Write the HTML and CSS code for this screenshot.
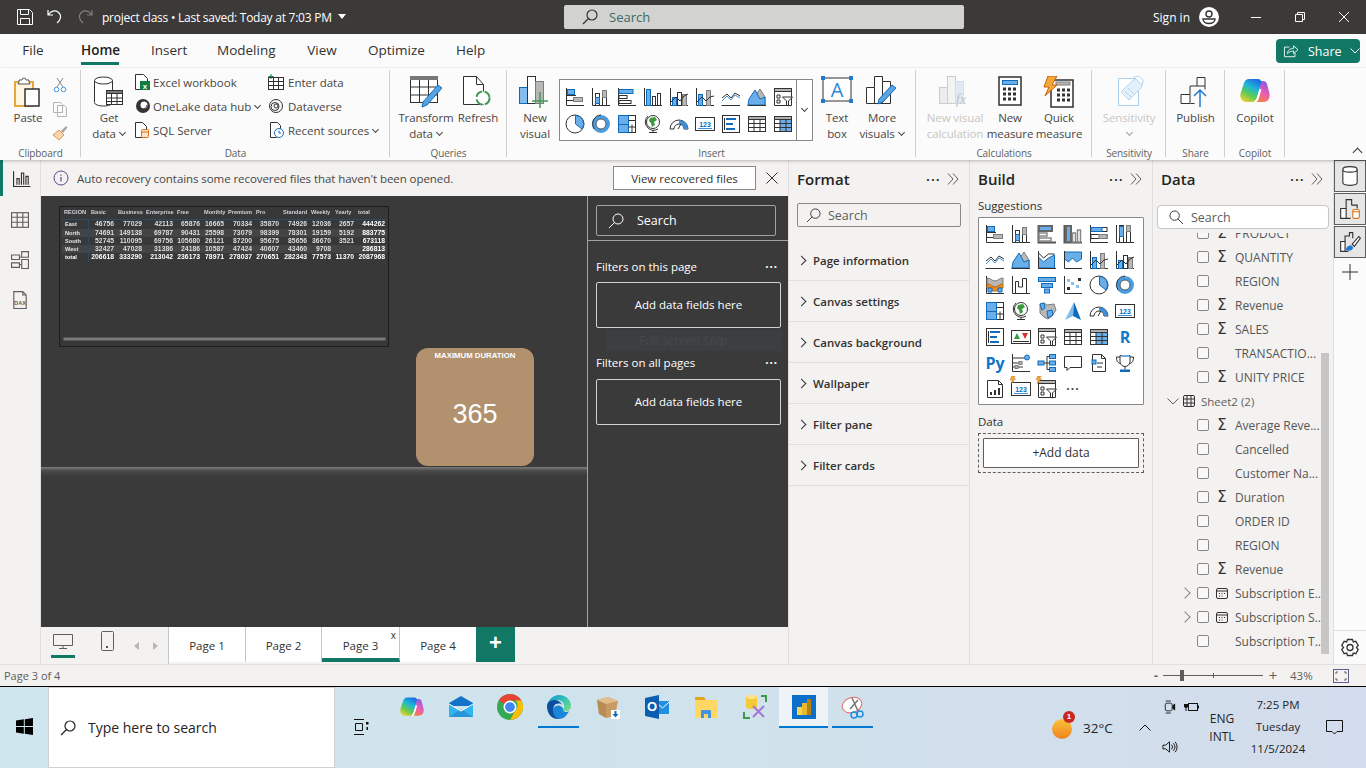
FILE: index.html
```html
<!DOCTYPE html>
<html lang="en">
<head>
<meta charset="utf-8">
<title>project class - Power BI Desktop</title>
<link rel="stylesheet" href="styles.css">
</head>
<body>
<svg class="defs" aria-hidden="true">
<defs>
<linearGradient id="cpL" x1="0.7" y1="0" x2="0.2" y2="1"><stop offset="0" stop-color="#1c6fe0"/><stop offset=".35" stop-color="#1fb8d8"/><stop offset=".65" stop-color="#5ecb52"/><stop offset="1" stop-color="#f6d02f"/></linearGradient>
<linearGradient id="cpR" x1="0.7" y1="0" x2="0.3" y2="1"><stop offset="0" stop-color="#8a5be8"/><stop offset=".5" stop-color="#e85cb4"/><stop offset="1" stop-color="#f8833c"/></linearGradient>
<linearGradient id="edge1" x1="0" y1="0" x2="1" y2="1"><stop offset="0" stop-color="#0f8fd8"/><stop offset=".55" stop-color="#36c9b0"/><stop offset="1" stop-color="#7fe07a"/></linearGradient>
<linearGradient id="weather" x1="0" y1="0" x2="0" y2="1"><stop offset="0" stop-color="#f9c23c"/><stop offset="1" stop-color="#f0821e"/></linearGradient>

<symbol id="hs" viewBox="0 0 20 20"><path class="k" d="M1.5 1v17.500H19"/><path class="k" d="M2 8.500h9M2 13.500h15"/><rect class="b" x="2.500" y="2.500" width="7" height="5"/><rect class="g" x="8.500" y="10.500" width="9" height="4"/></symbol>
<symbol id="cs" viewBox="0 0 20 20"><path class="k" d="M1.500 1v17.500H19"/><rect class="kf" x="4.500" y="6.500" width="4" height="12"/><rect class="b" x="4.500" y="10.500" width="4" height="6"/><rect class="kf" x="11.500" y="3.500" width="4" height="15"/><rect class="g" x="11.500" y="3.500" width="4" height="7"/></symbol>
<symbol id="hc" viewBox="0 0 20 20"><path class="k" d="M1.500 1v17.500H19"/><rect class="b" x="2" y="2.500" width="14" height="4"/><rect class="kf" x="2" y="8.500" width="8" height="3"/><rect class="kf" x="2" y="13.500" width="12" height="3"/></symbol>
<symbol id="cc" viewBox="0 0 20 20"><path class="k" d="M1.500 1v17.500H19"/><rect class="b" x="3.500" y="2.500" width="4" height="16"/><rect class="kf" x="9.500" y="9.500" width="3" height="9"/><rect class="kf" x="14.500" y="6.500" width="3" height="12"/></symbol>
<symbol id="hcg" viewBox="0 0 20 20"><path class="g2" d="M1.500 1v17.500H19"/><rect class="gb" x="2" y="2" width="13" height="5"/><rect class="gk" x="2" y="9" width="8" height="3"/><rect class="gk" x="2" y="14" width="12" height="3"/></symbol>
<symbol id="ccg" viewBox="0 0 20 20"><path class="g2" d="M1.500 1v17.500H19"/><rect class="gb" x="3" y="2" width="5" height="16"/><rect class="gk" x="9.500" y="9" width="3" height="9"/><rect class="gk" x="14.500" y="6" width="3" height="12"/></symbol>
<symbol id="h100" viewBox="0 0 20 20"><path class="k" d="M1.500 1v17.500H19"/><rect class="kf" x="2" y="3.500" width="16" height="4"/><rect class="b" x="2" y="3.500" width="11" height="4"/><rect class="kf" x="2" y="10.500" width="16" height="4"/><rect class="g" x="10" y="10.500" width="8" height="4"/></symbol>
<symbol id="c100" viewBox="0 0 20 20"><path class="k" d="M1.500 1v17.500H19"/><rect class="kf" x="4.500" y="1.500" width="4" height="17"/><rect class="b" x="4.500" y="2.500" width="4" height="10"/><rect class="kf" x="11.500" y="1.500" width="4" height="17"/><rect class="g" x="11.500" y="1.500" width="4" height="6"/></symbol>
<symbol id="ln" viewBox="0 0 20 20"><path class="k" d="M.5 18.500H19"/><path class="k" d="M1 11l5-4 4 4 4-5 5 3"/><path class="bl" d="M1 14l5-5 4 4 4-5 5 3"/></symbol>
<symbol id="ar" viewBox="0 0 20 20"><path class="g" d="M8 9l5-7 5 8v8H8z"/><path class="b" d="M1 18l1-6 6-9 5 9 5-2v8z"/><path class="k" d="M.5 18.500H19"/></symbol>
<symbol id="sa" viewBox="0 0 20 20"><path class="b" d="M1.500 7l5 5 5-4 6-3v13h-16z"/><path class="k" d="M1.500 1v17.500H19M1.500 3l5 5 5-4 6 0"/></symbol>
<symbol id="rib" viewBox="0 0 20 20"><path class="b" d="M1.500 2h17v7l-5 3-4-4-4 4-4-3z"/><path class="k" d="M1.500 1v17.500H19"/></symbol>
<symbol id="cb1" viewBox="0 0 20 20"><path class="k" d="M1.500 1v17.500H19"/><rect class="b" x="3.500" y="7.500" width="4" height="11"/><rect class="g" x="11.500" y="3.500" width="4" height="15"/><path class="k" d="M2 15l5-5 4 4 4-4 4-1"/></symbol>
<symbol id="cb2" viewBox="0 0 20 20"><path class="k" d="M1.500 1v17.500H19"/><rect class="b" x="3.500" y="10.500" width="4" height="8"/><rect class="kf" x="8.500" y="5.500" width="4" height="13"/><rect class="g" x="13.500" y="7.500" width="4" height="11"/><path class="k" d="M2 15l5-5 4 4 4-5 4-2"/></symbol>
<symbol id="rbn" viewBox="0 0 20 20"><path class="k" d="M1.500 1v17.500H19"/><path class="g" d="M2 3c4 0 5 3 8 3s4-3 8-3v6c-4 0-5 3-8 3s-4-3-8-3z"/><path fill="#f08b1c" stroke="#c66a0c" d="M2 9c4 0 5 3 8 3s4-3 8-3v4h-4l-2 3h-4l-2-3H2z"/><path class="b" d="M3 13h4v4H3zM13 13h4v4h-4z"/></symbol>
<symbol id="wf" viewBox="0 0 20 20"><path class="k" d="M1.500 1v17.500H19M4.500 18V6.500h3V12h4V3.500h4V18"/></symbol>
<symbol id="fn" viewBox="0 0 20 20"><rect class="b" x="1.500" y="2.500" width="17" height="4"/><rect class="b" x="4.500" y="8.500" width="11" height="4"/><rect class="b" x="7.500" y="14" width="5" height="4"/></symbol>
<symbol id="sc" viewBox="0 0 20 20"><path class="k" d="M1.500 1v17.500H19"/><rect x="4" y="12" width="3" height="3" fill="#333"/><rect x="8" y="7" width="3" height="3" fill="#8bc0ea"/><rect x="13" y="10" width="3" height="3" fill="#8bc0ea"/><rect x="15" y="3" width="3" height="3" fill="#333"/><rect x="4" y="4" width="3" height="3" fill="#8bc0ea"/></symbol>
<symbol id="pie" viewBox="0 0 20 20"><circle class="kf" cx="10" cy="10" r="9"/><path class="b" d="M10.500 1.500a8.500 8.500 0 0 1 6.500 13.500l-6.500-5z"/></symbol>
<symbol id="don" viewBox="0 0 20 20"><circle cx="10" cy="10" r="7" fill="none" stroke="#4a9be0" stroke-width="4"/><circle cx="10" cy="10" r="5" fill="#fff" stroke="#555"/><path class="k" d="M10 1a9 9 0 0 0-7 14"/></symbol>
<symbol id="tm" viewBox="0 0 20 20"><rect class="kf" x="1.500" y="1.500" width="17" height="17"/><rect class="b" x="1.500" y="1.500" width="10" height="9"/><rect class="b" x="1.500" y="10.500" width="10" height="8"/><path class="k" d="M11.500 6.500h7M15 10.500v8M11.500 13h7"/></symbol>
<symbol id="glb" viewBox="0 0 20 20"><circle class="kf" cx="10" cy="8" r="6.500"/><path fill="#3a9a3e" d="M7 4l5-1 2 3-3 2 1 3-3 2-1-4-2-2z"/><path class="k" d="M5 2a8 8 0 0 0 0 12 8 8 0 0 0 10 1M10 16v2.500M6 18.500h8"/></symbol>
<symbol id="fm" viewBox="0 0 20 20"><path class="g" d="M3 3l4-1 3 2 7-1 2 6-4 6-4 3-4-2-4-4z"/><path class="b" d="M3 3l4-1 1 5-3 2zM10 10l5-1 1 5-5 3z"/></symbol>
<symbol id="arw" viewBox="0 0 20 20"><path fill="#7fbdea" d="M11 1L2 19l8-4z"/><path fill="#0f6cbd" d="M11 1l7 18-8-4z"/></symbol>
<symbol id="gau" viewBox="0 0 20 20"><path class="k" d="M1 15a9 9 0 0 1 18 0h-4a5 5 0 0 0-10 0z"/><path fill="#3b8edb" d="M10 6a9 9 0 0 1 9 9h-4a5 5 0 0 0-5-5z"/><path class="k" d="M9 15l3-5"/></symbol>
<symbol id="crd" viewBox="0 0 20 20"><rect class="kf" x=".5" y="3.500" width="19" height="13"/><text class="t123" x="10" y="12.500" text-anchor="middle">123</text><path class="bl" d="M3 14.500h14"/></symbol>
<symbol id="mrc" viewBox="0 0 20 20"><rect class="kf" x="1.500" y="1.500" width="17" height="17"/><path class="bl2" d="M5 5h10M5 10h7M5 15h9"/><path class="k" d="M3.500 4v12"/></symbol>
<symbol id="kpi" viewBox="0 0 20 20"><rect class="kf" x=".5" y="3.500" width="19" height="13"/><path fill="#3a9a3e" d="M6 6l3 6H3z"/><path fill="#d13438" d="M11 6h6l-3 6z"/><path class="k" d="M2 14.500h16"/></symbol>
<symbol id="slc" viewBox="0 0 20 20"><path class="kf" d="M1.500 1.500h17v17h-17z"/><path d="M1.500 1.500h17v3h-17z" fill="#b5b5b5" stroke="#333"/><path class="k" d="M4 8h3v3H4zM4 13h3v3H4z"/><path class="kf" d="M9.500 10h10l-4 4v5l-2-1v-4z"/></symbol>
<symbol id="tbl" viewBox="0 0 20 20"><rect class="kf" x="1.500" y="2.500" width="17" height="15"/><path d="M1.500 2.500h17v3h-17z" fill="#b0b0b0" stroke="#333"/><path class="k" d="M1.500 9.500h17M1.500 13.500h17M7 5v12M13 5v12"/></symbol>
<symbol id="mtx" viewBox="0 0 20 20"><rect class="kf" x="1.500" y="2.500" width="17" height="15"/><rect x="7" y="6" width="11" height="11" fill="#69aee8"/><path d="M1.500 2.500h17v3h-17z" fill="#b0b0b0" stroke="#333"/><path class="k" d="M1.500 9.500h17M1.500 13.500h17M7 5v12M13 5v12"/></symbol>
<symbol id="rr" viewBox="0 0 20 20"><text class="tr" x="10" y="16" text-anchor="middle">R</text></symbol>
<symbol id="py" viewBox="0 0 20 20"><text class="tpy" x="10" y="16" text-anchor="middle">Py</text></symbol>
<symbol id="ki" viewBox="0 0 20 20"><path class="k" d="M1.500 1v17.500H19M2 5h12M2 10h6M2 14h10"/><circle class="b" cx="16" cy="4.500" r="2.500"/><rect class="g" x="8" y="8.500" width="3" height="3"/><rect class="g" x="4" y="12.500" width="3" height="3"/></symbol>
<symbol id="dt" viewBox="0 0 20 20"><rect class="b" x="1" y="8" width="6" height="4"/><rect class="b" x="12.500" y="1.500" width="6" height="4"/><rect class="b" x="12.500" y="8" width="6" height="4"/><rect class="b" x="12.500" y="14.500" width="6" height="4"/><path class="k" d="M7 10h5.500M10 3.500h2.500M10 16.500h2.500M10 3.500v13"/></symbol>
<symbol id="qa" viewBox="0 0 20 20"><path class="kf" d="M1.500 3.500h17v11H7l-3 3v-3H1.500z"/></symbol>
<symbol id="nar" viewBox="0 0 20 20"><path class="kf" d="M3.500 1.500h9l4 4v13h-13z"/><path class="k" d="M12.500 1.500v4h4M8 10h6M8 14h5"/><rect class="b" x="3" y="7" width="4" height="4"/></symbol>
<symbol id="goal" viewBox="0 0 20 20"><path class="k" d="M5 2.500h10v6a5 5 0 0 1-10 0zM5 4H1.500c0 4 1 6 4 6.500M15 4h3.500c0 4-1 6-4 6.500M10 13.500v3"/><rect fill="#0f6cbd" x="5" y="16.500" width="10" height="2.500"/><rect fill="#69aee8" x="6" y="2" width="8" height="2"/></symbol>
<symbol id="pag" viewBox="0 0 20 20"><path class="kf" d="M2.500 1.500h11l4 4v13h-15z"/><path class="k" d="M13.500 1.500v4h4"/><path stroke="#333" stroke-width="2" d="M6 16v-3M10 16v-5M14 16V9"/></symbol>
<symbol id="bolt" viewBox="0 0 20 20"><path fill="#f2a83b" stroke="#c8600c" stroke-width=".8" d="M5 0h6L8 5h4l-8 9 2-7H2z"/></symbol>

<symbol id="paste" viewBox="0 0 32 32"><path fill="#fff6df" stroke="#e9a640" stroke-width="2" d="M3 6h18v24H3z"/><path fill="#fff" stroke="#555" d="M7 6V4h3a2 2 0 0 1 4 0h3v2l1 2H6z"/><rect fill="#fff" stroke="#333" stroke-width="1.500" x="13" y="13" width="14" height="17"/></symbol>
<symbol id="getd" viewBox="0 0 32 32"><path class="kf" d="M1.500 4.500v22c0 2 4 3.500 9 3.500s9-1.500 9-3.500v-22"/><ellipse class="kf" cx="10.500" cy="4.500" rx="9" ry="3.500"/><rect class="kf" x="13.500" y="14.500" width="16" height="14"/><path d="M13.500 14.500h16v3h-16z" fill="#777" stroke="#333"/><path class="k" d="M13.500 22h16M13.500 25.500h16M18.500 17v11M24 17v11"/></symbol>
<symbol id="trf" viewBox="0 0 32 32"><rect class="kf" x=".5" y=".5" width="27" height="26"/><rect fill="#777" x="0" y="0" width="28" height="4"/><path class="k" d="M.5 11h27M.5 19h27M9.500 4v23M18.500 4v23"/><path fill="#5aa5e0" stroke="#0f6cbd" d="M28 9l4 3-15 17-5 2 1-5z"/></symbol>
<symbol id="rfr" viewBox="0 0 32 32"><path class="kf" d="M1.500 .5h13l7 8v20h-20z"/><path class="k" d="M14.500 .5v8h7"/><circle cx="21" cy="22" r="6.500" fill="#fff" stroke="#3f9a5a" stroke-width="2" stroke-dasharray="8 2.500"/></symbol>
<symbol id="nv" viewBox="0 0 32 32"><rect class="b2" x=".5" y="11.500" width="8" height="16"/><rect class="kf" x="8.500" y=".5" width="8" height="27"/><rect class="g" x="16.500" y="5.500" width="8" height="22"/><path fill="none" stroke="#3f9a5a" stroke-width="1.500" d="M21 16v16M13 25h16"/></symbol>
<symbol id="tb" viewBox="0 0 32 32"><rect class="kf" x="2" y="2" width="28" height="23"/><path fill="#1f7ad0" d="M0 0h4v4H0zM28 0h4v4h-4zM0 23h4v4H0zM28 23h4v4h-4z"/><text class="ta" x="16" y="21" text-anchor="middle">A</text></symbol>
<symbol id="mv" viewBox="0 0 32 32"><path class="kf" d="M.5 27.500v-16h8v-11h8v5h8v22z"/><path class="k" d="M8.500 11.500v16M16.500 5.500v22"/><path fill="#5aa5e0" stroke="#0f6cbd" d="M26 9l4 3-13 14-5 2 1-5z"/></symbol>
<symbol id="nvc" viewBox="0 0 32 32"><rect fill="#ededed" stroke="#ccc" x=".5" y="11.500" width="8" height="16"/><rect fill="#f3f3f3" stroke="#ccc" x="8.500" y=".5" width="8" height="27"/><rect fill="#dfeaf5" stroke="#ddd" x="16.500" y="5.500" width="8" height="22"/><text class="tfx" x="22" y="28" text-anchor="middle">fx</text></symbol>
<symbol id="calc" viewBox="0 0 32 32"><rect class="kf2" x="5" y="1" width="22" height="28"/><rect class="b" x="8.500" y="4.500" width="15" height="4"/><path stroke="#333" stroke-width="3" stroke-dasharray="3 2" d="M9 13h14M9 18h14M9 23h14"/></symbol>
<symbol id="qm" viewBox="0 0 32 32"><rect class="kf2" x="8" y="4" width="22" height="27"/><rect class="g" x="13" y="6" width="14" height="3"/><path stroke="#333" stroke-width="3" stroke-dasharray="3 2" d="M14 14h14M14 19h14M14 24h14"/><path fill="#f2a83b" stroke="#c8600c" d="M5 0h9L9 9h5L2 20l4-9H1z"/></symbol>
<symbol id="sens" viewBox="0 0 32 32"><path fill="#fff" stroke="#a6d0ee" d="M5.500 2.500h20v27h-20z"/><path fill="#e3eff9" stroke="#b6d5ee" d="M8 16L20 4l6-2 4 4-2 6L16 24z"/><path fill="#fff" stroke="#b6d5ee" d="M21 1l5-1 4 4-1 5z"/><path stroke="#b6d5ee" d="M12 15l6 6M15 12l6 6"/></symbol>
<symbol id="pub" viewBox="0 0 32 32"><path class="kf" d="M1 18.500h9v9H1z"/><path class="k" d="M10.500 27.500h4M10 18V10h7V1.500h8v12"/><path class="k" d="M17 10h8"/><path fill="none" stroke="#1f7ad0" stroke-width="1.500" d="M20 31V14M14 20l6-6 6 6"/></symbol>
<symbol id="copi" viewBox="0 0 30 26"><path fill="url(#cpR)" d="M20 3h3c2 0 3.500 1 4 3l2.400 9c1 5-1.400 9-6.400 9H13c3 0 4.500-2 5.500-5z"/><path fill="url(#cpL)" d="M9 1h9c2.500 0 3.500 1.800 3 4l-3.500 13c-.8 3.500-2.500 6-6 6H7c-5 0-7.500-4-6.500-8.500L4 5C5 2.500 6.500 1 9 1z"/><path fill="none" stroke="#fff" stroke-width="2" d="M15 24c2.500-1.500 3-4 3.500-6l2-7"/></symbol>
<symbol id="cyl" viewBox="0 0 20 20"><path class="kf" d="M3.500 4v12c0 1.500 3 2.500 6.500 2.500s6.500-1 6.500-2.500V4"/><ellipse class="kf" cx="10" cy="4" rx="6.500" ry="2.500"/></symbol>
<symbol id="mdlbar" viewBox="0 0 20 20"><path class="kf" d="M1.500 9.500h5v9h-5z"/><path class="k" d="M6.500 9.500V1.500h5v5M6.500 18.500h4"/><path class="k" d="M11.500 6.500h5v3"/><rect fill="#fff" stroke="#d9731f" x="12.500" y="10.500" width="6" height="8" rx="1.500"/><path stroke="#d9731f" d="M12.500 12.500h6"/></symbol>
<symbol id="brush" viewBox="0 0 20 20"><path class="kf" d="M1.500 9.500h4v9h-4z"/><path class="k" d="M5.500 10V4.500h4V1.500h3v5M5.500 18.500h3"/><path fill="#1f7ad0" d="M6 17c1-3 3-4 5-4l2 2c-1 3-4 4-7 2z"/><path class="kf" d="M12 12l6-7 1.500 1.500L14 14z"/></symbol>
</defs>
</svg>

<header class="titlebar">
  <div class="qat">
    <svg class="qi" viewBox="0 0 16 16"><path class="wl" d="M.5.500h12l3 3v12H.5zM3.500.500v5h8v-5M3.500 15.500v-6h9v6"/></svg>
    <svg class="qi" viewBox="0 0 16 16"><path class="wl2" d="M1 1v5h5M1.500 5.500C4 2 8 1 11 3c4 3 3 8-1 11"/></svg>
    <svg class="qi dim" viewBox="0 0 16 16"><path class="wl2" d="M15 1v5h-5M14.500 5.500C12 2 8 1 5 3c-4 3-3 8 1 11"/></svg>
    <span class="doc">project class <span class="dot">•</span> Last saved: Today at 7:03 PM</span>
    <span class="caret"></span>
  </div>
  <div class="tsearch">
    <svg class="sic" viewBox="0 0 16 16"><circle class="dl" cx="10" cy="6" r="5"/><path class="dl" d="M6.500 9.500L1 15"/></svg>
    <span>Search</span>
  </div>
  <div class="tright">
    <span class="signin">Sign in</span>
    <svg class="avatar" viewBox="0 0 20 20"><circle cx="10" cy="10" r="10" fill="#fff"/><circle cx="10" cy="7" r="3" fill="#fff" stroke="#333" stroke-width="1.400"/><path fill="#fff" stroke="#333" stroke-width="1.400" d="M4 12h12c0 3-3 4.500-6 4.500S4 15 4 12z"/></svg>
    <svg class="win" viewBox="0 0 10 10"><path class="wl" d="M0 5.500h10"/></svg>
    <svg class="win" viewBox="0 0 10 10"><path class="wl" d="M.5 2.500h7v7h-7zM2.500 2.500v-2h7v7h-2"/></svg>
    <svg class="win" viewBox="0 0 10 10"><path class="wl" d="M0 0l10 10M10 0L0 10"/></svg>
  </div>
</header>

<nav class="menubar">
  <span class="mt m-file">File</span>
  <span class="mt m-home">Home</span>
  <span class="mt m-insert">Insert</span>
  <span class="mt m-model">Modeling</span>
  <span class="mt m-view">View</span>
  <span class="mt m-opt">Optimize</span>
  <span class="mt m-help">Help</span>
  <span class="share">
    <svg class="shi" viewBox="0 0 16 16"><path class="wl" d="M6 3.500H.5v11h12V10"/><path class="wl" d="M4 11c0-4 3-6 7-6V2l5 4.500L11 11V8c-3 0-5 1-7 3z"/></svg>
    Share
    <svg class="shc" viewBox="0 0 10 6"><path class="wl" d="M.5.500L5 5 9.500.500"/></svg>
  </span>
</nav>

<section class="ribbon">
  <div class="grp g-clip">
    <div class="gbody">
      <div class="big w-paste"><svg class="bi"><use href="#paste"/></svg><span>Paste</span></div>
      <div class="smallcol">
        <svg class="si" viewBox="0 0 16 16"><path fill="none" stroke="#8a8a8a" d="M5 1l6 9M11 1L5 10"/><circle cx="4.500" cy="12.500" r="2.300" fill="none" stroke="#4a9be0"/><circle cx="11.500" cy="12.500" r="2.300" fill="none" stroke="#4a9be0"/></svg>
        <svg class="si" viewBox="0 0 16 16"><path fill="none" stroke="#b5b3b1" d="M1.500 1.500h7l2 2v8h-9zM5.500 4.500h7l2 2v9h-9z"/></svg>
        <svg class="si" viewBox="0 0 16 16"><path fill="#f8d5ad" stroke="#d89a60" d="M1 10l6-5 5 5-5 5z"/><path fill="#a7a5a3" d="M9 6l5-5 1.500 1.500L11 8z"/></svg>
      </div>
    </div>
    <div class="glabel">Clipboard</div>
  </div>

  <div class="grp g-data">
    <div class="gbody">
      <div class="big w-get"><svg class="bi"><use href="#getd"/></svg><span>Get</span><span>data <i class="ch"></i></span></div>
      <div class="dcol dcol1">
        <div class="sm"><svg class="si" viewBox="0 0 16 16"><path class="kf" d="M.5.500h8l4 4v11h-12z"/><rect fill="#107c41" x="5" y="7" width="10" height="9"/><text class="tx" x="10" y="14.500" text-anchor="middle">x</text></svg><span>Excel workbook</span></div>
        <div class="sm"><svg class="si" viewBox="0 0 16 16"><circle cx="8" cy="8" r="7" fill="#333"/><circle cx="9" cy="7" r="3.500" fill="#fff"/><path fill="none" stroke="#333" d="M5 12c3 0 6-1 7-5"/></svg><span>OneLake data hub <i class="ch"></i></span></div>
        <div class="sm"><svg class="si" viewBox="0 0 16 16"><path class="kf" d="M.5.500h7l4 4v11h-11z"/><rect fill="#fbe4c9" stroke="#d9731f" x="6.500" y="7.500" width="7" height="8" rx="1"/><path stroke="#d9731f" d="M6.500 10h7"/></svg><span>SQL Server</span></div>
      </div>
      <div class="dcol dcol2">
        <div class="sm"><svg class="si" viewBox="0 0 16 16"><rect class="kf" x=".5" y="3.500" width="15" height="12"/><path class="k" d="M.5 7.500h15M.5 11.500h15M5.500 3.500v12M10.500 3.500v12"/><path stroke="#107c41" d="M3 0v5M.5 2.500h5"/></svg><span>Enter data</span></div>
        <div class="sm"><svg class="si" viewBox="0 0 16 16"><circle class="k" cx="8" cy="8" r="6.500"/><circle class="k" cx="7" cy="8.500" r="4"/><circle class="k" cx="8" cy="8" r="2"/></svg><span>Dataverse</span></div>
        <div class="sm"><svg class="si" viewBox="0 0 16 16"><path class="kf" d="M2.500.500h7l3 3v5M2.500.500v15h6"/><circle fill="#fff" stroke="#0f6cbd" cx="11" cy="11" r="4.500"/><path stroke="#0f6cbd" fill="none" d="M11 8.500V11h2"/></svg><span>Recent sources <i class="ch"></i></span></div>
      </div>
    </div>
    <div class="glabel">Data</div>
  </div>

  <div class="grp g-query">
    <div class="gbody">
      <div class="big w-trf"><svg class="bi"><use href="#trf"/></svg><span>Transform</span><span>data <i class="ch"></i></span></div>
      <div class="big w-rfr"><svg class="bi"><use href="#rfr"/></svg><span>Refresh</span></div>
    </div>
    <div class="glabel">Queries</div>
  </div>

  <div class="grp g-insert">
    <div class="gbody">
      <div class="big w-nv"><svg class="bi"><use href="#nv"/></svg><span>New</span><span>visual</span></div>
      <div class="gallery">
        <div class="gcells">
          <svg class="ic"><use href="#hs"/></svg><svg class="ic"><use href="#cs"/></svg><svg class="ic"><use href="#hc"/></svg><svg class="ic"><use href="#cc"/></svg><svg class="ic"><use href="#cb2"/></svg><svg class="ic"><use href="#cb1"/></svg><svg class="ic"><use href="#ln"/></svg><svg class="ic"><use href="#ar"/></svg><svg class="ic"><use href="#slc"/></svg>
          <svg class="ic"><use href="#pie"/></svg><svg class="ic"><use href="#don"/></svg><svg class="ic"><use href="#tm"/></svg><svg class="ic"><use href="#glb"/></svg><svg class="ic"><use href="#gau"/></svg><svg class="ic"><use href="#crd"/></svg><svg class="ic"><use href="#mrc"/></svg><svg class="ic"><use href="#tbl"/></svg><svg class="ic"><use href="#mtx"/></svg>
        </div>
        <div class="gmore"><i class="ch"></i></div>
      </div>
      <div class="big w-tb"><svg class="bi"><use href="#tb"/></svg><span>Text</span><span>box</span></div>
      <div class="big w-mv"><svg class="bi"><use href="#mv"/></svg><span>More</span><span>visuals <i class="ch"></i></span></div>
    </div>
    <div class="glabel">Insert</div>
  </div>

  <div class="grp g-calc">
    <div class="gbody">
      <div class="big w-nvc off"><svg class="bi"><use href="#nvc"/></svg><span>New visual</span><span>calculation</span></div>
      <div class="big w-nm"><svg class="bi"><use href="#calc"/></svg><span>New</span><span>measure</span></div>
      <div class="big w-qm"><svg class="bi"><use href="#qm"/></svg><span>Quick</span><span>measure</span></div>
    </div>
    <div class="glabel">Calculations</div>
  </div>

  <div class="grp g-sens">
    <div class="gbody gcenter">
      <div class="big off"><svg class="bi"><use href="#sens"/></svg><span>Sensitivity</span><span><i class="ch"></i></span></div>
    </div>
    <div class="glabel">Sensitivity</div>
  </div>

  <div class="grp g-share">
    <div class="gbody gcenter">
      <div class="big"><svg class="bi"><use href="#pub"/></svg><span>Publish</span></div>
    </div>
    <div class="glabel">Share</div>
  </div>

  <div class="grp g-copilot">
    <div class="gbody gcenter">
      <div class="big"><svg class="bi bic"><use href="#copi"/></svg><span>Copilot</span></div>
    </div>
    <div class="glabel">Copilot</div>
  </div>

  <div class="collapse"><i class="chup"></i></div>
</section>

<main class="workspace">
  <aside class="rail">
    <div class="ritem active"><svg class="ri" viewBox="0 0 16 16"><path class="k" d="M.5 2v13.500h15M3.500 14V8.500h2V14M7.500 14V3.500h2V14M11.500 14V6.500h2V14"/></svg></div>
    <div class="ritem"><svg class="ri" viewBox="0 0 16 16"><rect class="gl" x=".5" y="1.500" width="15" height="13"/><path class="gl" d="M.5 5.500h15M.5 10h15M5.500 1.500v13M10.500 1.500v13"/></svg></div>
    <div class="ritem"><svg class="ri" viewBox="0 0 16 16"><path class="gl" d="M.5 3.500h7v4h-7zM.5 10.500h7v4h-7zM9.500.500h6v5h-6zM9.500 7.500h6v8h-6zM7.500 5.500h2M7.500 12h2"/></svg></div>
    <div class="ritem"><svg class="ri" viewBox="0 0 16 16"><path class="gl" d="M2.500.500h8l3 3v12h-11zM10.500.500v3h3"/><text class="tdax" x="8" y="12" text-anchor="middle">DAX</text></svg></div>
  </aside>

  <div class="center">
    <div class="notice">
      <svg class="info" viewBox="0 0 16 16"><circle class="inf" cx="8" cy="8" r="7"/><path class="inf2" d="M8 7v4.500M8 4.500v1.200"/></svg>
      <span class="ntext">Auto recovery contains some recovered files that haven't been opened.</span>
      <span class="nbtn">View recovered files</span>
      <svg class="nx" viewBox="0 0 12 12"><path class="k" d="M.5.500l11 11M11.500.500l-11 11"/></svg>
    </div>
    <div class="stage">
      <div class="canvas">
        <div class="matrix">
          <div class="mgrid">
            <span class="h">REGION</span><span class="h">Basic</span><span class="h">Business</span><span class="h">Enterprise</span><span class="h">Free</span><span class="h">Monthly</span><span class="h">Premium</span><span class="h">Pro</span><span class="h">Standard</span><span class="h">Weekly</span><span class="h">Yearly</span><span class="h">total</span>
            <span class="l">East</span><span>46756</span><span>77029</span><span>42113</span><span>65876</span><span>16665</span><span>70334</span><span>35870</span><span>74926</span><span>12036</span><span>2657</span><span class="tt">444262</span>
            <span class="l alt">North</span><span class="alt">74691</span><span class="alt">149138</span><span class="alt">69787</span><span class="alt">90431</span><span class="alt">25598</span><span class="alt">73079</span><span class="alt">98399</span><span class="alt">78301</span><span class="alt">19159</span><span class="alt">5192</span><span class="tt alt">883775</span>
            <span class="l">South</span><span>52745</span><span>110095</span><span>69756</span><span>105680</span><span>26121</span><span>87200</span><span>95675</span><span>85656</span><span>36670</span><span>3521</span><span class="tt">673118</span>
            <span class="l alt">West</span><span class="alt">32427</span><span class="alt">47028</span><span class="alt">31386</span><span class="alt">24186</span><span class="alt">10587</span><span class="alt">47424</span><span class="alt">40607</span><span class="alt">43460</span><span class="alt">9708</span><span class="alt"></span><span class="tt alt">286813</span>
            <span class="l tt">total</span><span class="tt">206618</span><span class="tt">333290</span><span class="tt">213042</span><span class="tt">236173</span><span class="tt">78971</span><span class="tt">278037</span><span class="tt">270651</span><span class="tt">282343</span><span class="tt">77573</span><span class="tt">11370</span><span class="tt">2087968</span>
          </div>
          <div class="hscroll"></div>
        </div>
        <div class="cardrow">
          <div class="kcard"><span class="ktitle">MAXIMUM DURATION</span><span class="kval">365</span></div>
        </div>
        <div class="shelf"></div>
      </div>
      <div class="filters">
        <div class="fsearchwrap">
          <div class="fsearch"><svg class="fsi" viewBox="0 0 16 16"><circle class="wl" cx="10" cy="6" r="5"/><path class="wl" d="M6.500 9.500L1 15"/></svg><span>Search</span></div>
        </div>
        <div class="fbody">
          <div class="fhead"><span>Filters on this page</span><span class="fdots">···</span></div>
          <div class="fbox">Add data fields here</div>
          <div class="ghost">Full-screen Snip</div>
          <div class="fhead fhead2"><span>Filters on all pages</span><span class="fdots">···</span></div>
          <div class="fbox">Add data fields here</div>
        </div>
      </div>
    </div>
    <div class="pages">
      <div class="ptools">
        <span class="pdev on"><svg class="pdi" viewBox="0 0 20 16"><path class="gd" d="M.5.500h19v11H.5zM10 11.500v3M6 14.500h8"/></svg></span>
        <span class="pdev"><svg class="pdp" viewBox="0 0 13 20"><rect class="gd" x=".5" y=".5" width="12" height="19" rx="1"/><rect x="5" y="15" width="2" height="2" fill="#555"/></svg></span>
        <span class="parr parr-l"></span><span class="parr parr-r"></span>
      </div>
      <span class="ptab p1">Page 1</span>
      <span class="ptab p2">Page 2</span>
      <span class="ptab p3 cur">Page 3<b class="px">x</b></span>
      <span class="ptab p4">Page 4</span>
      <span class="padd">+</span>
    </div>
  </div>

  <section class="pane pformat">
    <div class="phead"><h2>Format</h2><span class="pdots">···</span><svg class="pcol" viewBox="0 0 12 12"><path class="gd" d="M1 .5L6 6l-5 5.500M6 .5L11 6l-5 5.500"/></svg></div>
    <div class="psearch ps1"><svg class="psi" viewBox="0 0 16 16"><circle class="k" cx="10" cy="6" r="5"/><path class="k" d="M6.500 9.500L1 15"/></svg><span>Search</span></div>
    <div class="acc">
      <div class="arow"><i class="chr"></i>Page information</div>
      <div class="arow"><i class="chr"></i>Canvas settings</div>
      <div class="arow"><i class="chr"></i>Canvas background</div>
      <div class="arow"><i class="chr"></i>Wallpaper</div>
      <div class="arow"><i class="chr"></i>Filter pane</div>
      <div class="arow"><i class="chr"></i>Filter cards</div>
    </div>
  </section>

  <section class="pane pbuild">
    <div class="phead"><h2>Build</h2><span class="pdots">···</span><svg class="pcol" viewBox="0 0 12 12"><path class="gd" d="M1 .5L6 6l-5 5.500M6 .5L11 6l-5 5.500"/></svg></div>
    <div class="blabel">Suggestions</div>
    <div class="vizgrid">
      <svg class="ic"><use href="#hs"/></svg><svg class="ic"><use href="#cs"/></svg><svg class="ic"><use href="#hcg"/></svg><svg class="ic"><use href="#ccg"/></svg><svg class="ic"><use href="#h100"/></svg><svg class="ic"><use href="#c100"/></svg>
      <svg class="ic"><use href="#ln"/></svg><svg class="ic"><use href="#ar"/></svg><svg class="ic"><use href="#sa"/></svg><svg class="ic"><use href="#rib"/></svg><svg class="ic"><use href="#cb1"/></svg><svg class="ic"><use href="#cb2"/></svg>
      <svg class="ic"><use href="#rbn"/></svg><svg class="ic"><use href="#wf"/></svg><svg class="ic"><use href="#fn"/></svg><svg class="ic"><use href="#sc"/></svg><svg class="ic"><use href="#pie"/></svg><svg class="ic"><use href="#don"/></svg>
      <svg class="ic"><use href="#tm"/></svg><svg class="ic"><use href="#glb"/></svg><svg class="ic"><use href="#fm"/></svg><svg class="ic"><use href="#arw"/></svg><svg class="ic"><use href="#gau"/></svg><svg class="ic"><use href="#crd"/></svg>
      <svg class="ic"><use href="#mrc"/></svg><svg class="ic"><use href="#kpi"/></svg><svg class="ic"><use href="#slc"/></svg><svg class="ic"><use href="#tbl"/></svg><svg class="ic"><use href="#mtx"/></svg><svg class="ic"><use href="#rr"/></svg>
      <svg class="ic"><use href="#py"/></svg><svg class="ic"><use href="#ki"/></svg><svg class="ic"><use href="#dt"/></svg><svg class="ic"><use href="#qa"/></svg><svg class="ic"><use href="#nar"/></svg><svg class="ic"><use href="#goal"/></svg>
      <svg class="ic"><use href="#pag"/></svg>
      <span class="stack"><svg class="ic"><use href="#crd"/></svg><svg class="icb"><use href="#bolt"/></svg></span>
      <span class="stack"><svg class="ic"><use href="#slc"/></svg><svg class="icb"><use href="#bolt"/></svg></span>
      <span class="vdots">···</span>
    </div>
    <div class="blabel bdata">Data</div>
    <div class="dashed"><div class="adddata">+Add data</div></div>
  </section>

  <section class="pane pdata">
    <div class="phead"><h2>Data</h2><span class="pdots">···</span><svg class="pcol" viewBox="0 0 12 12"><path class="gd" d="M1 .5L6 6l-5 5.500M6 .5L11 6l-5 5.500"/></svg></div>
    <div class="psearch ps2"><svg class="psi" viewBox="0 0 16 16"><circle class="k" cx="6" cy="6" r="5"/><path class="k" d="M9.500 9.500L15 15"/></svg><span>Search</span></div>
    <div class="fields">
      <div class="frow frow-first"><i class="cb"></i><i class="sig">Σ</i><span>PRODUCT</span></div>
      <div class="frow"><i class="cb"></i><i class="sig">Σ</i><span>QUANTITY</span></div>
      <div class="frow"><i class="cb"></i><i class="sig"></i><span>REGION</span></div>
      <div class="frow"><i class="cb"></i><i class="sig">Σ</i><span>Revenue</span></div>
      <div class="frow"><i class="cb"></i><i class="sig">Σ</i><span>SALES</span></div>
      <div class="frow"><i class="cb"></i><i class="sig"></i><span>TRANSACTIO...</span></div>
      <div class="frow"><i class="cb"></i><i class="sig">Σ</i><span>UNITY PRICE</span></div>
      <div class="frow ftable"><svg class="fch" viewBox="0 0 12 7"><path class="gd" d="M.5.500L6 6l5.500-5.500"/></svg><svg class="fti" viewBox="0 0 12 12"><rect class="k" x=".5" y=".5" width="11" height="11" rx="1.500"/><path class="k" d="M.5 4h11M.5 8h11M4 .5v11M8 .5v11"/></svg><span>Sheet2 (2)</span></div>
      <div class="frow"><i class="cb"></i><i class="sig">Σ</i><span>Average Reve...</span></div>
      <div class="frow"><i class="cb"></i><i class="sig"></i><span>Cancelled</span></div>
      <div class="frow"><i class="cb"></i><i class="sig"></i><span>Customer Na...</span></div>
      <div class="frow"><i class="cb"></i><i class="sig">Σ</i><span>Duration</span></div>
      <div class="frow"><i class="cb"></i><i class="sig"></i><span>ORDER ID</span></div>
      <div class="frow"><i class="cb"></i><i class="sig"></i><span>REGION</span></div>
      <div class="frow"><i class="cb"></i><i class="sig">Σ</i><span>Revenue</span></div>
      <div class="frow fexp"><i class="chr chg"></i><i class="cb"></i><svg class="cal" viewBox="0 0 12 12"><rect class="k" x=".5" y="1.500" width="11" height="10" rx="1.500"/><path class="k" d="M.5 4h11M3 6.500h1M5.500 6.500h1M8 6.500h1M3 9h1M5.500 9h1"/></svg><span>Subscription E...</span></div>
      <div class="frow fexp"><i class="chr chg"></i><i class="cb"></i><svg class="cal" viewBox="0 0 12 12"><rect class="k" x=".5" y="1.500" width="11" height="10" rx="1.500"/><path class="k" d="M.5 4h11M3 6.500h1M5.500 6.500h1M8 6.500h1M3 9h1M5.500 9h1"/></svg><span>Subscription S...</span></div>
      <div class="frow"><i class="cb"></i><i class="sig"></i><span>Subscription T...</span></div>
      <div class="vscroll"></div>
    </div>
  </section>

  <aside class="rrail">
    <div class="rtab"><svg class="rti"><use href="#cyl"/></svg></div>
    <div class="rtab"><svg class="rti"><use href="#mdlbar"/></svg></div>
    <div class="rtab"><svg class="rti"><use href="#brush"/></svg></div>
    <svg class="rplus" viewBox="0 0 16 16"><path class="k" d="M8 0v16M0 8h16"/></svg>
    <div class="rgear"><svg class="gear" viewBox="0 0 20 20"><path class="k2" d="M7.500 1.500h5l.8 2.400 2.500-.6 2.400 4.200-1.700 2 1.700 2-2.400 4.200-2.500-.6-.8 2.400h-5l-.8-2.400-2.500.6L1.800 11.500l1.700-2-1.700-2 2.400-4.200 2.500.6z"/><circle class="k2" cx="10" cy="9.500" r="3"/></svg></div>
  </aside>
</main>

<div class="status">
  <span class="pgof">Page 3 of 4</span>
  <div class="zoomctl">
    <span class="zm">-</span>
    <span class="slider"><i class="tick"></i><i class="thumb"></i></span>
    <span class="zp">+</span>
    <span class="zv">43%</span>
    <svg class="fit" viewBox="0 0 16 14"><rect x=".5" y=".5" width="15" height="13" fill="none" stroke="#605e8c"/><path fill="none" stroke="#605e5c" d="M3 5V3h2M11 3h2v2M13 9v2h-2M5 11H3V9"/></svg>
  </div>
</div>

<footer class="taskbar">
  <div class="start"><svg class="wlogo" viewBox="0 0 17 17"><path fill="#000" d="M0 2.400L7.800 1.300V8H0zM8.800 1.200L17 0v8H8.800zM0 9h7.800v6.700L0 14.600zM8.800 9H17v8l-8.200-1.200z"/></svg></div>
  <div class="tsbox"><svg class="tsi" viewBox="0 0 16 16"><circle fill="none" stroke="#222" stroke-width="1.200" cx="10" cy="6" r="5"/><path stroke="#222" stroke-width="1.200" d="M6.500 9.500L1 15"/></svg><span>Type here to search</span></div>
  <div class="tview"><svg class="tvi" viewBox="0 0 16 16"><path fill="none" stroke="#111" d="M1 .5h10M1 15.500h10M2.500 4.500h7v7h-7z"/><rect fill="#111" x="13" y="3" width="2.500" height="2.500"/><rect fill="#111" x="13.500" y="8" width="1.500" height="3"/></svg></div>
  <div class="apps">
    <span class="app"><svg class="ai" viewBox="0 0 30 26"><use href="#copi"/></svg></span>
    <span class="app"><svg class="ai" viewBox="0 0 24 24"><path fill="#1273c9" d="M0 8l12-7 12 7v3H0z"/><path fill="#34b4f0" d="M0 9l12 7 12-7v13H0z"/><path fill="#0e5fa8" d="M0 22l12-8 12 8z" opacity=".35"/><path fill="none" stroke="#fff" d="M0 9l12 7 12-7"/></svg></span>
    <span class="app"><svg class="ai chrome" viewBox="0 0 24 24"><circle cx="12" cy="12" r="12" fill="#34a853"/><path fill="#ea4335" d="M12 0a12 12 0 0 1 10.400 6H12a6 6 0 0 0-5.300 3.200L1.600 6A12 12 0 0 1 12 0z"/><path fill="#fbbc04" d="M22.400 6A12 12 0 0 1 12 24l5-9a6 6 0 0 0 0-9z"/><circle cx="12" cy="12" r="6" fill="#fff"/><circle cx="12" cy="12" r="4.500" fill="#4285f4"/></svg></span>
    <span class="app on-line"><svg class="ai" viewBox="0 0 24 24"><path fill="url(#edge1)" d="M12 0c7 0 12 5 12 11 0 3-2 5-5 5-2 0-3-1-3-2 1-1 1.500-2 1-4-.6-3-3.500-5-7-5C5 5 1 8 0 11 1 5 6 0 12 0z"/><path fill="#0b4f9e" d="M0 11c0-4 4-6 8-6 3 0 6 2 7 5-2-2-6-2-8 1-2 4 1 10 6 12.800C5 25 0 19 0 11z"/><path fill="#1a86d8" d="M16 14c0 3 3 4 6 2-2 5-6 8-10 8-4-1-7-6-5.500-11 1.500-3 6-3.500 8.500-1 .5.500.8 1.200 1 2z"/></svg></span>
    <span class="app"><svg class="ai" viewBox="0 0 24 24"><path fill="#c99a63" d="M1 5l11-3 10 4-3 15-9 2-7-4z"/><path fill="#e1bd8d" d="M1 5l9 4 12-3-11-4z"/><path fill="#a97c47" d="M10 9v14l-7-4-2-14z" opacity=".5"/><rect fill="#fff" x="15" y="15" width="9" height="9"/><path fill="#0f6cbd" d="M18.500 16h2v3h2l-3 3.500-3-3.500h2z"/></svg></span>
    <span class="app"><svg class="ai" viewBox="0 0 24 24"><rect fill="#1f8fe0" x="11" y="6" width="13" height="13"/><path fill="none" stroke="#fff" d="M11 7l6.500 6L24 7"/><path fill="#0a5db0" d="M0 3l14-3v24L0 21z"/><text class="toutl" x="7" y="16" text-anchor="middle">O</text></svg></span>
    <span class="app"><svg class="ai" viewBox="0 0 24 24"><path fill="#e0a61c" d="M1 2h9l2 3H1z"/><path fill="#fed765" d="M1 5h22v18H1z"/><path fill="#4294de" d="M7 23v-7a1 1 0 0 1 1-1h8a1 1 0 0 1 1 1v7h-3v-4h-4v4z"/></svg></span>
    <span class="app"><svg class="ai" viewBox="0 0 24 24"><path fill="#f6c93b" d="M3 2c0-1 3-2 5.500-2S14 1 14 2v10c0 1-3 2-5.500 2S3 13 3 12z"/><path fill="#fbe38e" d="M3 2c0 1 3 2 5.500 2S14 3 14 2 11 0 8.500 0 3 1 3 2z"/><path fill="none" stroke="#3d9a4a" stroke-width="2" d="M18 1h5v6M1 17v6h6"/><path fill="none" stroke="#a874d9" stroke-width="2" d="M10 22l11-11M10 11l11 11"/></svg></span>
    <span class="app app-pbi on-line"><svg class="ai" viewBox="0 0 24 24"><rect width="24" height="24" fill="#0d6fc9"/><path fill="#f6d34c" d="M5 12h5v8H5z"/><path fill="#e8b82e" d="M10 8h5v12h-5z"/><path fill="#b78110" d="M15 4h4v16h-4z"/></svg></span>
    <span class="app on-line"><svg class="ai" viewBox="0 0 24 24"><ellipse cx="11" cy="10" rx="10" ry="7.500" transform="rotate(-20 11 10)" fill="#fff" stroke="#e06a6a"/><path fill="none" stroke="#777" stroke-width="1.500" d="M11 3l6 13M17 5L9 14"/><circle cx="19" cy="19" r="3" fill="none" stroke="#1f8fe0" stroke-width="1.500"/><circle cx="13" cy="20" r="3" fill="none" stroke="#1f8fe0" stroke-width="1.500"/></svg></span>
  </div>
  <div class="tray">
    <span class="wx"><svg class="wxi" viewBox="0 0 22 22"><circle cx="10" cy="12" r="10" fill="url(#weather)"/></svg><b class="badge">1</b></span>
    <span class="temp">32°C</span>
    <svg class="tup" viewBox="0 0 12 7"><path fill="none" stroke="#111" d="M.5 6.500L6 1l5.500 5.500"/></svg>
    <div class="sysgrid">
      <svg class="sy1" viewBox="0 0 14 18"><rect fill="none" stroke="#111" x="1.500" y="4.500" width="8" height="9" rx="2"/><path fill="#111" d="M10 7l3-2v8l-3-2z"/><path fill="none" stroke="#111" d="M2 2h6M2 16h6"/></svg>
      <svg class="sy2" viewBox="0 0 16 10"><rect fill="none" stroke="#111" x="5.500" y="1.500" width="9" height="7"/><path fill="#111" d="M15 3.500h1v3h-1zM1 2h4v3l-1.500 1v3h-1V6L1 5z"/></svg>
      <svg class="sy3" viewBox="0 0 17 14"><path fill="none" stroke="#111" d="M1 5h3l4-3.500v11L4 9H1zM10 4.500a3.500 3.500 0 0 1 0 5M12 3a6 6 0 0 1 0 8M14 1.500a8.500 8.500 0 0 1 0 11"/></svg>
    </div>
    <div class="lang"><span>ENG</span><span>INTL</span></div>
    <div class="clock"><span>7:25 PM</span><span>Tuesday</span><span>11/5/2024</span></div>
    <svg class="notif" viewBox="0 0 17 15"><path fill="none" stroke="#111" d="M.5.500h16v11h-5.500L8.500 14 6 11.500H.5z"/></svg>
  </div>
</footer>
</body>
</html>
```
FILE: styles.css
```css
* { box-sizing: border-box; }
html, body { margin: 0; padding: 0; }
body {
  width: 1366px; height: 768px; overflow: hidden;
  font-family: "Open Sans", "Noto Sans", sans-serif;
  font-size: 12px; color: #323130; background: #f3f2f1;
  display: flex; flex-direction: column;
}
i { font-style: normal; }
.defs { position: absolute; width: 0; height: 0; }

/* shared svg strokes */
.k { fill: none; stroke: #323130; stroke-width: 1; }
.k2 { fill: none; stroke: #323130; stroke-width: 1.300; }
.kf { fill: #fff; stroke: #323130; stroke-width: 1; }
.kf2 { fill: #fff; stroke: #323130; stroke-width: 1.500; }
.b { fill: #69aee8; stroke: #0f6cbd; stroke-width: 1; }
.b2 { fill: #83bdf0; stroke: #0f6cbd; stroke-width: 1; }
.g { fill: #b8b8b8; stroke: #7c7c7c; stroke-width: 1; }
.g2 { fill: none; stroke: #555; stroke-width: 2; }
.gb { fill: #69aee8; stroke: #666; stroke-width: 2; }
.gk { fill: #fff; stroke: #888; stroke-width: 1.500; }
.bl { fill: none; stroke: #3f8fd8; stroke-width: 1; }
.bl2 { fill: none; stroke: #0f6cbd; stroke-width: 2; }
.wl { fill: none; stroke: #fff; stroke-width: 1; }
.wl2 { fill: none; stroke: #fff; stroke-width: 1.200; }
.dl { fill: none; stroke: #333; stroke-width: 1.200; }
.gd { fill: none; stroke: #605e5c; stroke-width: 1; }
.gl { fill: none; stroke: #605e5c; stroke-width: 1; }
.t123 { font: 700 7px "Liberation Sans", sans-serif; fill: #0f6cbd; }
.tr { font: 700 16px "Open Sans", sans-serif; fill: #0f76c8; }
.tpy { font: 700 16px "Open Sans", sans-serif; fill: #0f76c8; }
.ta { font: 400 20px "Open Sans", sans-serif; fill: #2b88d8; }
.tfx { font: italic 15px "Liberation Serif", serif; fill: #c8c6c4; }
.tx { font: 700 8px "Liberation Sans", sans-serif; fill: #fff; }
.tdax { font: 700 5px "Liberation Sans", sans-serif; fill: #605e5c; }
.toutl { font: 700 13px "Liberation Sans", sans-serif; fill: #fff; }

/* title bar */
.titlebar { height: 34px; background: #3b3a39; color: #fff; display: flex; align-items: center; flex: none; position: relative; }
.qat { width: 564px; flex: none; display: flex; align-items: center; padding-left: 17px; }
.qi { width: 16px; height: 16px; margin-right: 14px; }
.qi.dim { opacity: .35; margin-right: 9px; }
.doc { font-size: 12px; letter-spacing: -.25px; white-space: nowrap; width: 236px; }
.caret { width: 0; height: 0; border: 4px solid transparent; border-top: 5px solid #fff; margin-top: 2px; }
.tsearch { width: 400px; flex: none; height: 24px; background: #d2d2d0; border-radius: 2px; display: flex; align-items: center; padding-left: 18px; color: #3d6b61; font-size: 13px; }
.sic { width: 16px; height: 16px; margin-right: 11px; }
.tright { flex: 1; display: flex; align-items: center; padding-left: 189px; }
.signin { font-size: 12px; width: 46px; }
.avatar { width: 20px; height: 20px; margin-right: 32px; }
.win { width: 10px; height: 10px; margin-right: 34px; }

/* menu */
.menubar { height: 34px; background: #fbfbfb; display: flex; align-items: center; position: relative; flex: none; }
.mt { font-size: 13.500px; color: #323130; line-height: 32px; height: 34px; flex: none; text-align: center; }
.m-file { margin-left: 22px; width: 22px; }
.m-home { margin-left: 37px; width: 38px; font-weight: 600; position: relative; color: #201f1e; }
.m-home::after { content: ""; position: absolute; left: 0; right: 0; bottom: 3px; height: 3px; background: #117865; }
.m-insert { margin-left: 32px; width: 34px; }
.m-model { margin-left: 32px; width: 58px; }
.m-view { margin-left: 32px; width: 30px; }
.m-opt { margin-left: 31px; width: 56px; }
.m-help { margin-left: 32px; width: 28px; }
.share { margin-left: auto; margin-right: 6px; width: 84px; height: 24px; background: #117865; color: #fff; border-radius: 4px; display: flex; align-items: center; padding-left: 7px; font-size: 12.500px; gap: 9px; }
.shi { width: 16px; height: 14px; }
.shc { width: 10px; height: 6px; margin-left: -1px; }

/* ribbon */
.ribbon { height: 92px; background: #fbfbfb; display: flex; flex: none; position: relative; box-shadow: 0 1px 3px rgba(0,0,0,.25); z-index: 2; }
.grp { display: flex; flex-direction: column; padding-top: 2px; position: relative; }
.grp::after { content: ""; position: absolute; right: 0; top: 2px; bottom: 3px; width: 1px; background: #d2d0ce; }
.gbody { flex: 1; display: flex; }
.gcenter { justify-content: center; }
.glabel { height: 14px; text-align: center; font-size: 10px; letter-spacing: -.1px; color: #605e5c; line-height: 14px; }
.g-clip { width: 81px; }
.g-data { width: 309px; }
.g-query { width: 117px; }
.g-insert { width: 409px; }
.g-calc { width: 176px; }
.g-sens { width: 74px; }
.g-share { width: 59px; }
.g-copilot { width: 60px; }

.big { display: flex; flex-direction: column; align-items: center; font-size: 11.500px; letter-spacing: -.1px; line-height: 16px; color: #484644; white-space: nowrap; padding-top: 6px; flex: none; }
.big .bi { width: 32px; height: 32px; margin-bottom: 2px; flex: none; }
.big .bic { width: 30px; height: 26px; margin: 2px 0 6px; }
.big.off { color: #c8c6c4; }
.ch { display: inline-block; width: 5px; height: 5px; border-right: 1px solid #484644; border-bottom: 1px solid #484644; transform: rotate(45deg); margin: 0 1px 3px 1px; }
.off .ch { border-color: #a19f9d; }
.w-paste { width: 40px; margin-left: 8px; }
.smallcol { display: flex; flex-direction: column; gap: 8px; padding-top: 7px; margin-left: 4px; }
.si { width: 16px; height: 16px; flex: none; }
.w-get { width: 40px; margin-left: 8px; }
.dcol { display: flex; flex-direction: column; padding-top: 0; }
.dcol1 { width: 133px; margin-left: 6px; }
.dcol1 .sm { gap: 2px; }
.dcol2 { width: 120px; }
.sm { height: 24px; display: flex; align-items: center; gap: 4px; font-size: 11.500px; color: #484644; white-space: nowrap; }
.w-trf { width: 56px; margin-left: 8px; }
.w-rfr { width: 42px; margin-left: 3px; }
.w-nv { width: 40px; margin-left: 8px; }
.gallery { width: 254px; height: 62px; margin: 9px 0 0 4px; border: 1px solid #8a8886; display: flex; background: #fff; }
.gcells { width: 236px; display: grid; grid-template-columns: repeat(9, 26px); grid-auto-rows: 27px; align-items: center; justify-items: center; padding: 3px 0 0 2px; }
.gmore { flex: 1; border-left: 1px solid #8a8886; display: flex; align-items: center; justify-content: center; }
.ic { width: 20px; height: 20px; display: block; }
.w-tb { width: 40px; margin-left: 4px; }
.w-mv { width: 44px; margin-left: 3px; }
.w-nvc { width: 60px; margin-left: 9px; }
.w-nm { width: 50px; }
.w-qm { width: 48px; }
.collapse { position: absolute; right: 5px; bottom: 4px; }
.chup { display: block; width: 7px; height: 7px; border-left: 1.500px solid #333; border-top: 1.500px solid #333; transform: rotate(45deg); }

/* workspace */
.workspace { flex: 1; display: flex; min-height: 0; height: 504px; }
.rail { width: 41px; background: #f3f2f1; border-right: 1px solid #e1dfdd; flex: none; }
.ritem { height: 40px; display: flex; align-items: center; justify-content: center; }
.ritem.active { height: 36px; border-left: 3px solid #117865; margin-bottom: 4px; }
.ri { width: 18px; height: 18px; }
.center { width: 747px; flex: none; display: flex; flex-direction: column; }
.notice { height: 36px; background: #f3f2f1; display: flex; align-items: center; padding-left: 12px; flex: none; }
.info { width: 16px; height: 16px; }
.inf { fill: none; stroke: #5c4a8a; }
.inf2 { fill: none; stroke: #5c4a8a; stroke-width: 1.200; }
.ntext { margin-left: 8px; width: 536px; font-size: 11.500px; letter-spacing: -.07px; color: #484644; }
.nbtn { width: 143px; height: 24px; background: #fff; border: 1px solid #8a8886; text-align: center; line-height: 24px; font-size: 11.500px; color: #323130; }
.nx { width: 12px; height: 12px; margin-left: 10px; }

.stage { flex: 1; display: flex; min-height: 0; background: #3a3a3a; }
.canvas { width: 546px; flex: none; padding: 10px 0 0 18px; display: flex; flex-direction: column; }
.matrix { width: 330px; height: 141px; background: #383838; border: 1px solid #1d1d1d; padding: 1px 2px 3px 2px; display: flex; flex-direction: column; }
.mgrid { flex: 1; display: grid; grid-template-columns: 27px 27px 28px 31px 27px 24px 28px 27px 28px 24px 23px 31px; grid-template-rows: 12px 9px 8px 8px 8px 9px; align-content: start; font: 700 6.800px/8px "Liberation Sans", sans-serif; color: #dcdcdc; filter: blur(.3px); }
.mgrid span { text-align: right; white-space: nowrap; padding-right: 2px; }
.mgrid .h { text-align: left; color: #d0d0d8; padding: 0 0 0 2px; border-bottom: 1px solid #2a4a66; font-size: 5.600px; }
.mgrid .l { text-align: left; color: #e8e8e8; padding-left: 3px; border-right: 1px solid #2a4a66; font-size: 5.600px; }
.mgrid .alt { background: #444; }
.mgrid .tt { color: #fff; }
.hscroll { height: 4px; background: #7c7c7c; border: 1px solid #555; margin: 0 0 2px 1px; border-radius: 1px; }

.cardrow { height: 119px; margin: 1px 0 0 357px; }
.kcard { width: 118px; height: 118px; background: #b1916e; border-radius: 12px; display: flex; flex-direction: column; align-items: center; color: #fff; font-family: "Liberation Sans", sans-serif; }
.ktitle { font-size: 7.800px; font-weight: 700; margin-top: 3px; line-height: 10px; }
.kval { font-size: 27px; line-height: 32px; margin-top: 37px; }
.shelf { height: 9px; margin: 0 0 0 -18px; background: linear-gradient(#7c7c7c, #4c4c4c 40%, #3a3a3a); }

.filters { flex: 1; border-left: 1px solid #a3a3a3; color: #fff; display: flex; flex-direction: column; }
.fsearchwrap { height: 45px; padding: 9px 12px 0 8px; border-bottom: 1px solid #a3a3a3; flex: none; }
.fsearch { height: 31px; border: 1px solid #a3a3a3; border-radius: 2px; display: flex; align-items: center; padding-left: 11px; font-size: 12.500px; }
.fsi { width: 16px; height: 16px; margin-right: 13px; }
.fbody { padding: 17px 7px 0 8px; display: flex; flex-direction: column; }
.fhead { display: flex; justify-content: space-between; height: 24px; font-size: 11.500px; line-height: 18px; padding-right: 3px; }
.fhead2 { height: 25px; }
.fdots { font-weight: 700; letter-spacing: 1px; }
.fbox { height: 46px; border: 1px solid #d2d0ce; border-radius: 2px; text-align: center; line-height: 44px; font-size: 11.500px; font-weight: 500; }
.ghost { height: 21px; margin: 2px 0 3px 11px; background: #3b3f41; color: #47494b; font-size: 12px; line-height: 21px; padding-left: 32px; }

/* pages */
.pages { height: 37px; display: flex; background: #f3f2f1; flex: none; }
.ptools { width: 128px; display: flex; align-items: flex-start; padding-left: 10px; border-right: 1px solid #c8c6c4; position: relative; flex: none; }
.pdev { width: 24px; height: 30px; display: flex; justify-content: center; padding-top: 7px; }
.pdev.on { border-bottom: 3px solid #117865; height: 31px; }
.pdi { width: 20px; height: 16px; }
.pdp { width: 13px; height: 20px; margin-top: -3px; }
.pdev + .pdev { margin-left: 20px; }
.parr { width: 0; height: 0; border: 4px solid transparent; margin-top: 15px; }
.parr-l { border-right: 5px solid #b9b7b5; margin-left: 11px; }
.parr-r { border-left: 5px solid #b9b7b5; margin-left: 14px; }
.ptab { background: #fff; text-align: center; line-height: 37px; font-size: 11.500px; color: #323130; border-right: 1px solid #c8c6c4; position: relative; flex: none; height: 35px; }
.p1 { width: 77px; }
.p2 { width: 76px; }
.p3 { width: 78px; }
.p4 { width: 76px; border-right: 0; }
.cur { border-bottom: 4px solid #117865; }
.px { position: absolute; right: 3px; top: 2px; font-size: 10px; line-height: 12px; font-weight: 400; }
.padd { width: 39px; height: 35px; background: #117865; color: #fff; text-align: center; font-size: 22px; line-height: 32px; font-weight: 700; font-family: "Liberation Sans", sans-serif; flex: none; }

/* panes */
.pane { background: #f3f2f1; border-left: 1px solid #e1dfdd; flex: none; position: relative; }
.pformat { width: 181px; }
.pbuild { width: 183px; }
.pdata { width: 181px; }
.phead { height: 36px; display: flex; align-items: center; padding: 2px 10px 0 8px; }
.phead h2 { margin: 0; font-size: 15px; font-weight: 600; color: #252423; flex: 1; }
.pdots { font-size: 12px; letter-spacing: 1.500px; font-weight: 700; color: #252423; margin-right: 6px; }
.pcol { width: 12px; height: 12px; }
.psearch { display: flex; align-items: center; border: 1px solid #8a8886; border-radius: 2px; height: 24px; font-size: 12.500px; color: #605e5c; }
.ps1 { margin: 7px 8px 0 8px; padding-left: 8px; }
.ps2 { margin: 9px 4px 0 4px; background: #fff; padding-left: 11px; border-color: #c8c6c4; border-radius: 4px; }
.psi { width: 15px; height: 15px; margin-right: 7px; }
.acc { margin-top: 13px; }
.arow { height: 41px; border-bottom: 1px solid #e1dfdd; display: flex; align-items: center; padding-left: 9px; font-size: 11.500px; font-weight: 600; color: #323130; }
.chr { display: inline-block; width: 7px; height: 7px; border-right: 1px solid #323130; border-top: 1px solid #323130; transform: rotate(45deg); margin-right: 8px; flex: none; }

.blabel { font-size: 11.500px; padding-left: 8px; height: 21px; line-height: 20px; color: #323130; }
.bdata { margin-top: 7px; height: 21px; }
.vizgrid { margin-left: 8px; width: 166px; height: 188px; background: #fff; border: 1px solid #8a8886; border-radius: 1px; display: grid; grid-template-columns: repeat(6, 26px); grid-auto-rows: 25.800px; justify-items: center; align-items: center; padding: 3px 0 0 3px; }
.stack { position: relative; display: block; width: 20px; height: 20px; }
.icb { position: absolute; left: -2px; top: -3px; width: 11px; height: 11px; }
.vdots { font-weight: 700; letter-spacing: 1px; font-size: 12px; color: #444; }
.dashed { margin: 0 0 0 8px; width: 166px; height: 40px; border: 1px dashed #605e5c; padding: 4px; }
.adddata { height: 30px; background: #fff; border: 1px solid #605e5c; border-radius: 1px; text-align: center; line-height: 28px; font-size: 12px; }

.fields { height: 430px; margin-top: 4px; position: relative; overflow: hidden; }
.frow { height: 24px; display: flex; align-items: center; font-size: 12px; color: #555; padding-left: 44px; white-space: nowrap; }
.frow-first { margin-top: -12px; }
.cb { width: 12px; height: 12px; border: 1px solid #8a8886; border-radius: 2px; background: #f8f8f8; flex: none; }
.sig { width: 26px; text-align: center; flex: none; font-size: 15px; line-height: 14px; color: #323130; font-family: "DejaVu Sans", sans-serif; }
.ftable { padding-left: 14px; color: #605e5c; font-size: 11.500px; }
.fch { width: 12px; height: 7px; margin-right: 4px; }
.fti { width: 12px; height: 12px; margin-right: 6px; }
.fexp { padding-left: 28px; }
.chg { width: 8px; height: 8px; border-color: #8a8886; margin-right: 8px; }
.cal { width: 12px; height: 12px; margin: 0 7px 0 7px; flex: none; }
.vscroll { position: absolute; right: 4px; top: 120px; width: 8px; height: 301px; background: #c8c6c4; }

.rrail { flex: 1; background: #fbfbfb; border-left: 1px solid #e1dfdd; display: flex; flex-direction: column; align-items: stretch; }
.rtab { height: 32px; background: #e6e6e6; border: 1px solid #605e5c; margin-bottom: 1px; display: flex; align-items: center; justify-content: center; }
.rti { width: 22px; height: 22px; }
.rplus { width: 16px; height: 16px; margin: 5px 0 0 8px; }
.rgear { margin-top: auto; height: 34px; border-top: 1px solid #e1dfdd; display: flex; align-items: center; justify-content: center; background: #fbfbfb; }
.gear { width: 20px; height: 20px; }

/* status */
.status { height: 23px; background: #f3f2f1; border-top: 1px solid #e1dfdd; border-bottom: 1px solid #000; display: flex; align-items: center; padding-left: 4px; flex: none; }
.pgof { font-size: 11px; color: #605e5c; }
.zoomctl { margin-left: auto; display: flex; align-items: center; padding-right: 17px; color: #605e5c; }
.zm { width: 9px; font-weight: 700; }
.slider { width: 100px; height: 1px; background: #605e5c; position: relative; margin-right: 3px; }
.tick { position: absolute; left: 50px; top: -2px; width: 1px; height: 5px; background: #605e5c; }
.thumb { position: absolute; left: 17px; top: -5px; width: 4px; height: 11px; background: #605e5c; }
.zp { width: 14px; font-size: 15px; line-height: 15px; text-align: center; margin-right: 10px; }
.zv { width: 24px; font-size: 11.500px; margin-right: 19px; }
.fit { width: 16px; height: 14px; }

/* taskbar */
.taskbar { height: 81px; flex: none; background: linear-gradient(90deg, #cfe6ef, #d0e2ec 55%, #d3dcec); display: flex; }
.start { width: 48px; display: flex; align-items: center; justify-content: center; flex: none; padding-bottom: 2px; }
.wlogo { width: 17px; height: 17px; }
.tsbox { width: 287px; background: #fff; border: 1px solid #d0d0d0; display: flex; align-items: center; padding-left: 11px; font-size: 14px; color: #252423; flex: none; }
.tsi { width: 16px; height: 16px; margin-right: 12px; }
.tview { width: 52px; display: flex; align-items: center; justify-content: center; flex: none; padding-bottom: 2px; }
.tvi { width: 16px; height: 16px; }
.apps { display: flex; flex: none; }
.app { width: 49px; height: 41px; display: flex; justify-content: center; padding-top: 8px; position: relative; flex: none; }
.ai { width: 24px; height: 24px; }
.chrome { width: 26px; height: 26px; margin-top: -1px; }
.on-line::after { content: ""; position: absolute; left: 4px; right: 4px; bottom: 0; height: 2px; background: #0078d4; }
.app-pbi { background: #eef3f8; }
.app-pbi::after { left: 0; right: 0; }
.tray { flex: 1; position: relative; display: flex; align-items: center; padding-left: 175px; }
.wx { position: relative; width: 22px; height: 22px; flex: none; }
.wxi { width: 22px; height: 22px; }
.badge { position: absolute; left: 11px; top: -6px; width: 12px; height: 12px; border-radius: 50%; background: #c8281e; color: #fff; font: 700 8px/12px "Liberation Sans", sans-serif; text-align: center; }
.temp { font-size: 13.500px; width: 55px; margin-left: 9px; color: #252423; }
.tup { width: 12px; height: 7px; flex: none; margin-left: 1px; }
.sysgrid { width: 42px; margin-left: 8px; height: 80px; display: grid; grid-template-columns: 21px 21px; grid-template-rows: 40px 40px; justify-items: center; align-items: center; margin-top: -2px; }
.sy1 { width: 12px; height: 16px; }
.sy2 { width: 16px; height: 10px; }
.sy3 { width: 16px; height: 14px; grid-row: 2; }
.lang { display: flex; flex-direction: column; align-items: center; width: 36px; margin-left: 3px; font-size: 12px; line-height: 18px; color: #252423; }
.clock { display: flex; flex-direction: column; align-items: center; width: 62px; margin-left: 7px; font-size: 11.500px; line-height: 22px; color: #252423; margin-top: -1px; }
.notif { width: 17px; height: 15px; margin-left: 17px; flex: none; }
```
